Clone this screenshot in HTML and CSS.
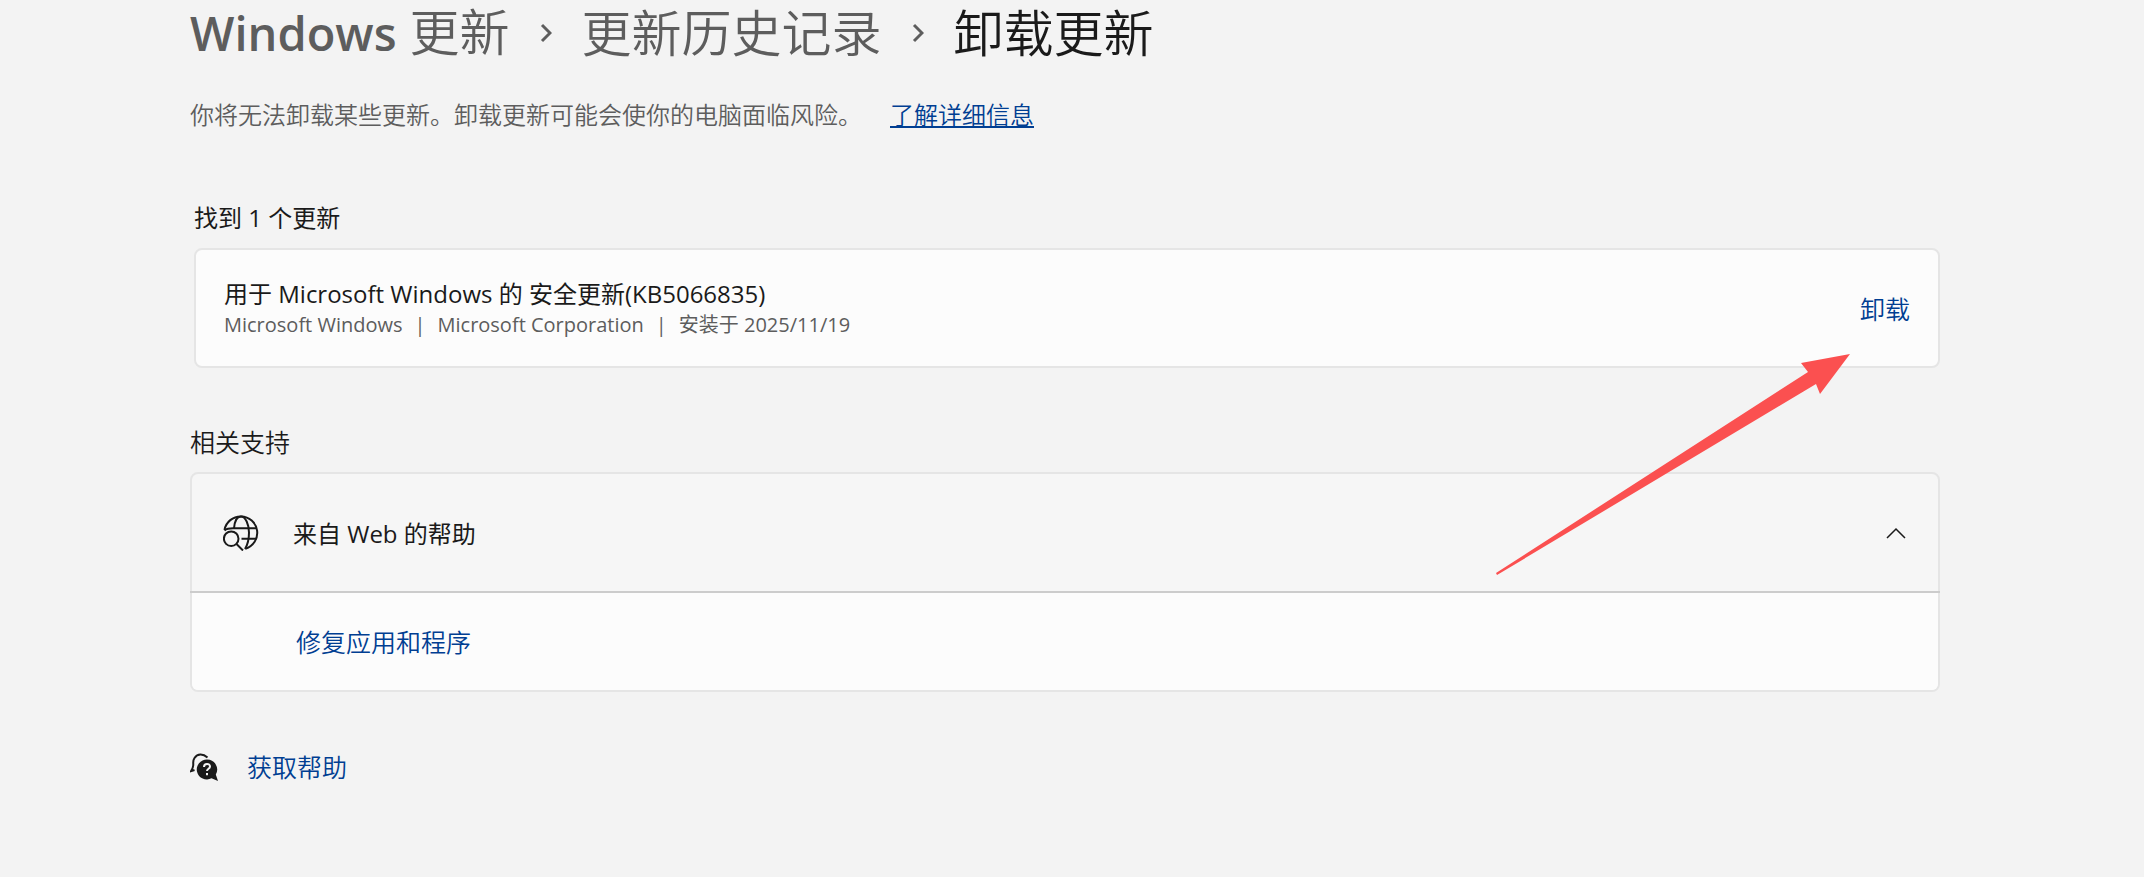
FILE: index.html
```
<!DOCTYPE html>
<html lang="zh-CN">
<head>
    <meta charset="UTF-8">
    <title>卸载更新</title>
    <link rel="stylesheet" href="styles.css">
</head>
<body>
<main class="page">
    <h1 class="breadcrumb">
        <a class="crumb" href="#"><b>Windows</b> 更新</a>
        <svg class="crumb-arrow" viewBox="0 0 12 20"><path d="M2 2l8 8-8 8"/></svg>
        <a class="crumb" href="#">更新历史记录</a>
        <svg class="crumb-arrow" viewBox="0 0 12 20"><path d="M2 2l8 8-8 8"/></svg>
        <span class="crumb-current">卸载更新</span>
    </h1>
    <p class="intro">你将无法卸载某些更新。卸载更新可能会使你的电脑面临风险。<a class="link underlined" href="#">了解详细信息</a></p>

    <section class="updates">
        <h2 class="section-title">找到 1 个更新</h2>
        <div class="card update">
            <div>
                <div class="update-name">用于 Microsoft Windows 的 安全更新(KB5066835)</div>
                <div class="update-info">
                    <span>Microsoft Windows</span>
                    <span>|</span>
                    <span>Microsoft Corporation</span>
                    <span>|</span>
                    <span>安装于 2025/11/19</span>
                </div>
            </div>
            <button class="link action" type="button">卸载</button>
        </div>
    </section>

    <section class="support">
        <h2 class="section-title large">相关支持</h2>
        <div class="card help-card">
            <button class="expander" type="button" aria-expanded="true">
                <svg class="icon-globe" viewBox="0 0 36 36">
                    <path d="M1.500 15A16.500 16.500 0 1 1 22.500 33.700"/>
                    <path d="M1.500 15.500C4 13.500 6 13.300 10 13.300H33.500M18.500 23.700H33.500"/>
                    <path d="M11 13.300C11.500 8 13.500 1.500 18 1.500s8 8 8 16c0 7-1.500 12.500-4 16.500"/>
                    <circle cx="8.200" cy="23.700" r="7.300"/>
                    <path d="M13.500 29l6.500 6.500"/>
                </svg>
                <span class="expander-label">来自 Web 的帮助</span>
                <svg class="icon-chevron" viewBox="0 0 20 12"><path d="M1 11l9-9 9 9"/></svg>
            </button>
            <div class="expander-content">
                <a class="link action" href="#">修复应用和程序</a>
            </div>
        </div>
    </section>

    <footer class="help">
        <svg class="icon-help" viewBox="0 0 28 28">
            <path d="M17.500 4.500C13 .5 7.500.5 4.500 5 2.500 8 3.500 9.500 3.200 12.500 3 15 2 16.500 1 18.200l3.500-1.200"/>
            <path class="bubble" d="M17 6.500a10 10 0 1 0 4.500 18.800L28 28l-2.200-6.500A10 10 0 0 0 17 6.500z"/>
            <path class="mark" d="M14 14c0-4 6-4 6-.5 0 2.500-3 2-3 4.500M17 20v2.200"/>
        </svg>
        <a class="link action" href="#">获取帮助</a>
    </footer>

    <!-- pointer to the uninstall button -->
    <svg class="pointer" viewBox="0 0 354 222">
        <path d="M0 219L312 18l-7-9 49-9-30 40-4-10L1 221z"/>
    </svg>
</main>
</body>
</html>
```
FILE: styles.css
```
* {
    box-sizing: border-box;
}

body {
    margin: 0;
    background-color: #f3f3f3;
    color: #1a1a1a;
    font-family: "Open Sans", "Noto Sans CJK SC", sans-serif;
    font-size: 24px;
    line-height: 32px;
}

.page {
    position: relative;
    padding: 0 204px 40px 190px;
}

h1, h2, p {
    margin: 0;
    font-weight: normal;
}

button {
    padding: 0;
    border: none;
    background: none;
    color: inherit;
    font: inherit;
    cursor: pointer;
}

a {
    text-decoration: none;
}

svg {
    fill: none;
    stroke: #1a1a1a;
    stroke-width: 2;
    flex-shrink: 0;
}

.breadcrumb {
    display: flex;
    align-items: center;
    gap: 30px;
    font-size: 50px;
    font-weight: 350;
    line-height: 64px;
    color: #1a1a1a;
}

.crumb {
    color: #5d5d5d;
}

.crumb b {
    font-size: 47px;
    font-weight: 600;
}

.crumb-arrow {
    width: 12px;
    height: 20px;
    stroke: #5d5d5d;
    stroke-width: 3;
}

.intro {
    margin-top: 34px;
    font-weight: 350;
    color: #5d5d5d;
}

.link {
    color: #003e92;
}

.underlined {
    margin-left: 28px;
    text-decoration: underline;
}

.card {
    border: 2px solid #e5e5e5;
    border-radius: 8px;
    background-color: #fcfcfc;
}

.section-title {
    margin-bottom: 14px;
    font-size: 24px;
}

.action, .large {
    font-size: 25px;
    font-weight: 350;
}

.updates {
    margin: 71px 0 0 4px;
}

.update {
    display: flex;
    align-items: center;
    justify-content: space-between;
    height: 120px;
    padding: 2px 28px 0;
}

.update-info {
    display: flex;
    gap: 12px;
    font-size: 20px;
    line-height: 30px;
    color: #5d5d5d;
}

.support {
    margin-top: 58px;
}

.help-card {
    background-color: #f6f6f6;
}

/* the divider runs over the side borders of the card */
.expander {
    display: flex;
    align-items: center;
    width: calc(100% + 4px);
    height: 119px;
    margin: 0 -2px;
    padding: 0 34px 0 33px;
    border-bottom: 2px solid #cccccc;
}

.icon-globe {
    width: 36px;
    height: 36px;
}

.expander-label {
    margin-left: 34px;
    padding-top: 2px;
}

.icon-chevron {
    width: 20px;
    height: 12px;
    margin-left: auto;
}

.icon-chevron path {
    stroke-width: 1.5;
}

.expander-content {
    padding: 33px 104px 31px;
    border-radius: 0 0 6px 6px;
    background-color: #fcfcfc;
}

.help {
    display: flex;
    align-items: center;
    gap: 29px;
    margin-top: 59px;
}

.icon-help {
    width: 28px;
    height: 28px;
}

.bubble {
    fill: #1a1a1a;
    stroke: none;
}

.mark {
    stroke: #f3f3f3;
}

.pointer {
    position: absolute;
    top: 354px;
    right: 294px;
    width: 354px;
    height: 222px;
    fill: #fb5050;
    stroke: none;
    pointer-events: none;
}
```
